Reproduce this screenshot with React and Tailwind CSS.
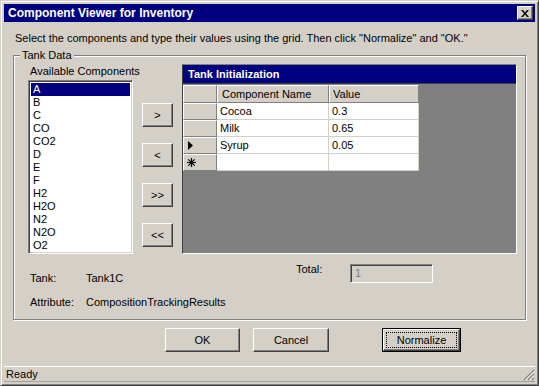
import React from 'react'

const raised =
  'border border-t-white border-l-white border-r-[#404040] border-b-[#404040] shadow-[inset_-1px_-1px_0_#808080,inset_1px_1px_0_#d4d0c8]'
const sunken =
  'border border-t-[#808080] border-l-[#808080] border-r-white border-b-white shadow-[inset_1px_1px_0_#404040,inset_-1px_-1px_0_#d4d0c8]'

const components = ['A', 'B', 'C', 'CO', 'CO2', 'D', 'E', 'F', 'H2', 'H2O', 'N2', 'N2O', 'O2']

const rows = [
  { name: 'Cocoa', value: '0.3' },
  { name: 'Milk', value: '0.65' },
  { name: 'Syrup', value: '0.05', current: true },
]

const RowHead = ({ children }) => (
  <div className="w-[34px] h-[17px] bg-[#d4d0c8] border-t border-l border-t-white border-l-white border-r border-b border-r-[#808080] border-b-[#808080] flex items-center pl-[3px]">
    {children}
  </div>
)

const Cell = ({ w, children }) => (
  <div className={`${w} h-[17px] bg-white border-r border-b border-[#d4d0c8] flex items-center pl-[3px] whitespace-nowrap`}>
    {children}
  </div>
)

const App = () => {
  return (
    <div className="w-[539px] h-[386px] bg-[#d4d0c8] border border-t-[#d4d0c8] border-l-[#d4d0c8] border-r-[#404040] border-b-[#404040] shadow-[inset_1px_1px_0_#fff,inset_-1px_-1px_0_#808080] p-[3px] flex flex-col text-[11px] leading-[13px] text-black font-[Liberation_Sans,Arial,sans-serif] overflow-hidden">
      {/* Title bar */}
      <div className="h-[18px] shrink-0 bg-[#000080] flex items-center justify-between pl-[4px] pr-[2px]">
        <span className="text-white font-bold text-[12px]">Component Viewer for Inventory</span>
        <div className={`w-[16px] h-[14px] bg-[#d4d0c8] flex items-center justify-center ${raised}`}>
          <svg width="8" height="7" viewBox="0 0 8 7">
            <path d="M0 0h2l2 2.5L6 0h2L5 3.5 8 7H6L4 4.5 2 7H0l3-3.5z" fill="#000" />
          </svg>
        </div>
      </div>

      {/* Instruction */}
      <div className="mt-[10px] ml-[11px] whitespace-nowrap">
        Select the components and type their values using the grid. Then click "Normalize" and "OK."
      </div>

      {/* Tank Data group */}
      <div className="relative mt-[10px] ml-[9px] w-[513px] h-[265px] shrink-0 border border-[#808080] shadow-[inset_1px_1px_0_#fff,1px_1px_0_#fff] flex flex-col">
        <span className="absolute -top-[7px] left-[6px] px-[2px] bg-[#d4d0c8]">Tank Data</span>

        <div className="flex items-start pt-[8px]">
          {/* list */}
          <div className="ml-[14px] w-[105px] flex flex-col">
            <span className="pl-[2px] mt-[1px] whitespace-nowrap">Available Components</span>
            <div className={`mt-[2px] w-[105px] h-[174px] bg-white ${sunken} p-[2px] flex flex-col`}>
              {components.map((c, i) => (
                <div
                  key={c}
                  className={`h-[13px] pl-[2px] flex items-center ${i === 0 ? 'bg-[#000080] text-white' : ''}`}
                >
                  {c}
                </div>
              ))}
            </div>
          </div>

          {/* move buttons */}
          <div className="ml-[9px] mt-[39px] flex flex-col gap-[16px]">
            {['>', '<', '>>', '<<'].map((b) => (
              <div key={b} className={`w-[31px] h-[24px] flex items-center justify-center ${raised}`}>
                {b}
              </div>
            ))}
          </div>

          {/* grid */}
          <div className="ml-[9px] w-[335px] h-[190px] bg-[#808080] border border-t-[#808080] border-l-[#404040] border-r-white border-b-white flex flex-col">
            <div className="h-[19px] bg-[#000080] border-b border-[#404040] text-white font-bold flex items-center pl-[5px]">
              Tank Initialization
            </div>
            <div className="mt-[1px] flex flex-col">
              <div className="flex">
                <div className="w-[34px] h-[18px] bg-[#d4d0c8] border-t border-l border-white border-r border-b border-r-[#808080] border-b-[#808080]" />
                <div className="w-[112px] h-[18px] bg-[#d4d0c8] border-t border-l border-white border-r border-b border-r-[#808080] border-b-[#808080] flex items-center pl-[4px]">
                  Component Name
                </div>
                <div className="w-[90px] h-[18px] bg-[#d4d0c8] border-t border-l border-white border-r border-b border-r-[#808080] border-b-[#808080] flex items-center pl-[3px]">
                  Value
                </div>
              </div>
              {rows.map((r) => (
                <div key={r.name} className="flex">
                  <RowHead>
                    {r.current && (
                      <svg width="6" height="9" viewBox="0 0 6 9" className="ml-[1px]">
                        <path d="M0 0l5 4.5L0 9z" fill="#000" />
                      </svg>
                    )}
                  </RowHead>
                  <Cell w="w-[112px]">{r.name}</Cell>
                  <Cell w="w-[90px]">{r.value}</Cell>
                </div>
              ))}
              <div className="flex">
                <RowHead>
                  <svg width="9" height="9" viewBox="0 0 9 9">
                    <path d="M4.5 0v9M0 4.5h9M1.3 1.3l6.4 6.4M7.7 1.3L1.3 7.7" stroke="#000" strokeWidth="1.2" />
                  </svg>
                </RowHead>
                <Cell w="w-[112px]" />
                <Cell w="w-[90px]" />
              </div>
            </div>
          </div>
        </div>

        {/* bottom info */}
        <div className="flex items-start mt-[10px]">
          <div className="w-[282px] pl-[16px] pt-[8px] flex flex-col gap-[11px]">
            <div className="flex">
              <span className="w-[56px]">Tank:</span>
              <span>Tank1C</span>
            </div>
            <div className="flex">
              <span className="w-[56px]">Attribute:</span>
              <span>CompositionTrackingResults</span>
            </div>
          </div>
          <span className="w-[54px] mt-[-1px]">Total:</span>
          <div className={`w-[83px] h-[19px] ${sunken} flex items-center pl-[4px] text-[#808080]`}>1</div>
        </div>
      </div>

      {/* dialog buttons */}
      <div className="mt-[8px] ml-[161px] flex items-start">
        <div className={`w-[75px] h-[24px] flex items-center justify-center ${raised}`}>OK</div>
        <div className={`ml-[13px] w-[76px] h-[24px] flex items-center justify-center ${raised}`}>Cancel</div>
        <div className="ml-[53px] w-[79px] h-[24px] border border-black p-0">
          <div className="w-full h-full border border-t-white border-l-white border-r-[#404040] border-b-[#404040] shadow-[inset_-1px_-1px_0_#808080] flex items-center justify-center p-[2px]">
            <div className="w-full h-full border border-dotted border-black flex items-center justify-center">
              Normalize
            </div>
          </div>
        </div>
      </div>

      {/* status bar */}
      <div className="mt-auto h-[16px] border-t border-white border-b border-b-[#a0a0a0] flex items-center justify-between pl-[2px]">
        <span>Ready</span>
        <svg width="12" height="12" viewBox="0 0 12 12" className="self-end">
          <path d="M11 1L1 11M11 5L5 11M11 9L9 11" stroke="#808080" strokeWidth="1.2" />
          <path d="M11 2.5L2.5 11M11 6.5L6.5 11M11 10.5L10.5 11" stroke="#fff" strokeWidth="0.8" />
        </svg>
      </div>
    </div>
  )
}

export default App
